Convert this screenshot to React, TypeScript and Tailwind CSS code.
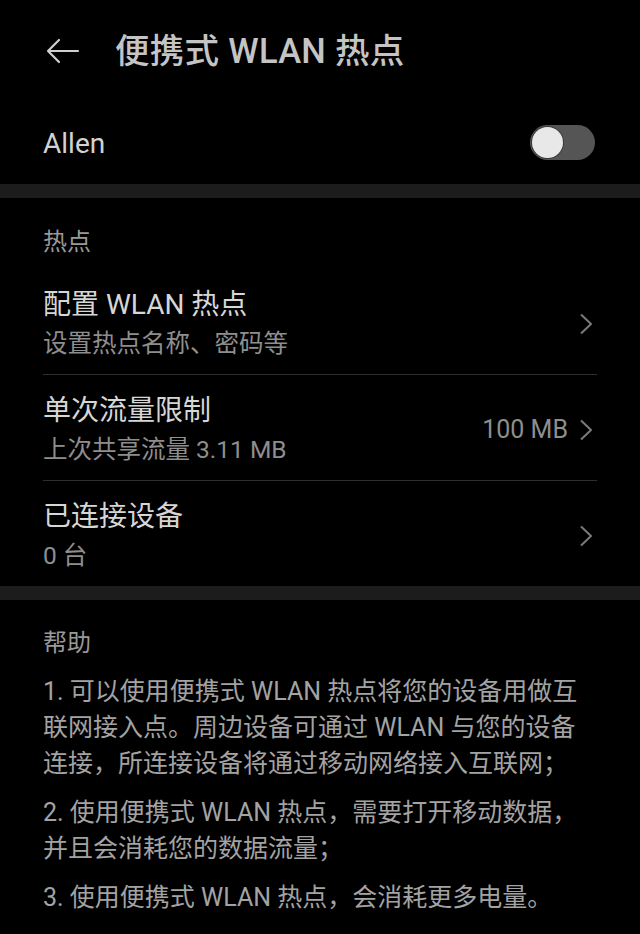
const FONT = "font-['Roboto','Noto_Sans_CJK_SC',sans-serif]";

function Chevron() {
  return (
    <svg width="14" height="22" viewBox="0 0 14 22" fill="none" className="shrink-0">
      <path d="M2 1.5 L12 11 L2 20.5" stroke="#7a7a7a" strokeWidth="2" strokeLinejoin="round" />
    </svg>
  );
}

function Item({ title, subtitle, value, last }: { title: string; subtitle: string; value?: string; last?: boolean }) {
  return (
    <div className={last ? "" : "border-b border-[#2e2e2e]"}>
      <div className="flex items-center justify-between pt-[18px] pb-[13px]">
        <div className="flex flex-col">
          <div className="text-[28px] leading-[36px] text-[#d6d6d6]">{title}</div>
          <div className="mt-[4px] text-[24.5px] leading-[34px] text-[#8e8e8e]">{subtitle}</div>
        </div>
        <div className="flex items-center gap-[11px] pr-[4px]">
          {value && <span className="text-[25px] text-[#8e8e8e]">{value}</span>}
          <Chevron />
        </div>
      </div>
    </div>
  );
}

const help = [
  ["1. 可以使用便携式 WLAN 热点将您的设备用做互", "联网接入点。周边设备可通过 WLAN 与您的设备", "连接，所连接设备将通过移动网络接入互联网；"],
  ["2. 使用便携式 WLAN 热点，需要打开移动数据，", "并且会消耗您的数据流量；"],
  ["3. 使用便携式 WLAN 热点，会消耗更多电量。"],
];

export default function App() {
  return (
    <div className={`w-[640px] h-[934px] overflow-hidden bg-black ${FONT}`}>
      {/* top bar */}
      <div className="flex h-[100px] items-center px-[46px] pt-[4px]">
        <svg width="34" height="26" viewBox="0 0 34 26" fill="none" className="-mt-[2px]">
          <path d="M2 13 H32 M13 2 L2 13 L13 24" stroke="#cfcfcf" strokeWidth="2.2" strokeLinecap="round" strokeLinejoin="round" />
        </svg>
        <h1 className="ml-[35px] text-[34.5px] font-medium text-[#c4c4c4] tracking-[0.3px]">便携式 WLAN 热点</h1>
      </div>

      {/* main switch */}
      <div className="flex h-[84px] items-center justify-between px-[43px] pr-[45px]">
        <span className="pt-[3px] text-[28px] text-[#d2d2d2]">Allen</span>
        <div className="flex h-[35px] w-[65px] items-center rounded-full bg-[#555555] px-[2px]">
          <div className="h-[31px] w-[31px] rounded-full bg-[#e8e8e8] ring-1 ring-[#3a3a3a]" />
        </div>
      </div>

      <div className="h-[14px] bg-[#1c1c1c]" />

      {/* hotspot section */}
      <div className="px-[43px]">
        <div className="pt-[30px] pb-[13px] text-[24px] leading-[28px] text-[#999999]">热点</div>
        <Item title="配置 WLAN 热点" subtitle="设置热点名称、密码等" />
        <Item title="单次流量限制" subtitle="上次共享流量 3.11 MB" value="100 MB" />
        <Item title="已连接设备" subtitle="0 台" last />
      </div>

      <div className="h-[14px] bg-[#1c1c1c]" />

      {/* help */}
      <div className="px-[43px]">
        <div className="pt-[29px] mb-[17px] text-[24px] leading-[28px] text-[#999999]">帮助</div>
        <div className="flex flex-col gap-[13px]">
          {help.map((p, i) => (
            <p key={i} className="text-[25px] leading-[36px] text-[#a3a3a3]">
              {p.map((line, j) => (
                <span key={j} className="block whitespace-nowrap">{line}</span>
              ))}
            </p>
          ))}
        </div>
      </div>
    </div>
  );
}
